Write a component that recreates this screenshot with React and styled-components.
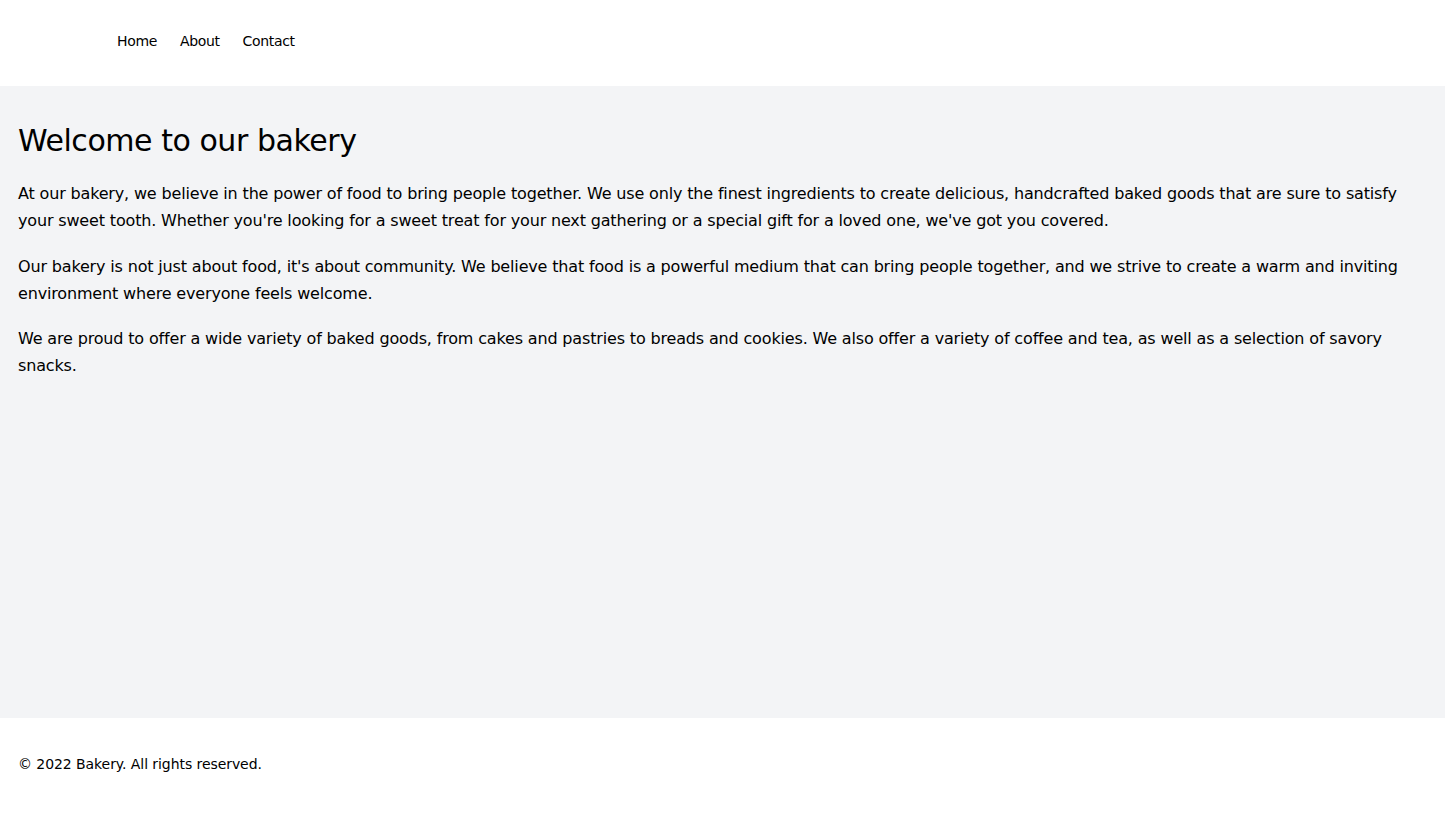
import React from "react";
import styled, { createGlobalStyle } from "styled-components";

const GlobalStyle = createGlobalStyle`
  html, body {
    margin: 0;
    padding: 0;
    background: #ffffff;
  }
  body {
    font-family: "DejaVu Sans", "Liberation Sans", Arial, sans-serif;
    color: #000000;
  }
  * { box-sizing: border-box; }
`;

const Page = styled.div`
  display: flex;
  flex-direction: column;
  min-height: 813px;
`;

const Header = styled.header`
  background: #ffffff;
  height: 86px;
  padding: 31px 18px 0 117px;
`;

const Nav = styled.nav`
  display: flex;
  gap: 23px;
`;

const NavLink = styled.a`
  font-size: 14px;
  line-height: 20px;
  letter-spacing: -0.025em;
  color: #000000;
  text-decoration: none;
`;

const Main = styled.main`
  flex: 1;
  background: #f3f4f6;
  padding: 37px 18px 32px;
  height: 632px;
`;

const Title = styled.h1`
  margin: 0 0 21px;
  font-size: 30px;
  line-height: 36px;
  font-weight: 400;
  letter-spacing: -0.015em;
`;

const Paragraph = styled.p`
  margin: 0 0 18.6px;
  font-size: 16px;
  line-height: 27px;
  letter-spacing: -0.01em;
`;

const Footer = styled.footer`
  background: #ffffff;
  padding: 36px 18px 39px;
`;

const FooterText = styled.p`
  margin: 0;
  font-size: 14px;
  line-height: 20px;
  letter-spacing: -0.005em;
`;

export default function App() {
  return (
    <>
      <GlobalStyle />
      <Page>
        <Header>
          <Nav>
            <NavLink href="#">Home</NavLink>
            <NavLink href="#">About</NavLink>
            <NavLink href="#">Contact</NavLink>
          </Nav>
        </Header>
        <Main>
          <Title>Welcome to our bakery</Title>
          <Paragraph>
            At our bakery, we believe in the power of food to bring people together. We use only the finest ingredients to create delicious, handcrafted baked goods that are sure to satisfy your sweet tooth. Whether you're looking for a sweet treat for your next gathering or a special gift for a loved one, we've got you covered.
          </Paragraph>
          <Paragraph>
            Our bakery is not just about food, it's about community. We believe that food is a powerful medium that can bring people together, and we strive to create a warm and inviting environment where everyone feels welcome.
          </Paragraph>
          <Paragraph>
            We are proud to offer a wide variety of baked goods, from cakes and pastries to breads and cookies. We also offer a variety of coffee and tea, as well as a selection of savory snacks.
          </Paragraph>
        </Main>
        <Footer>
          <FooterText>© 2022 Bakery. All rights reserved.</FooterText>
        </Footer>
      </Page>
    </>
  );
}
